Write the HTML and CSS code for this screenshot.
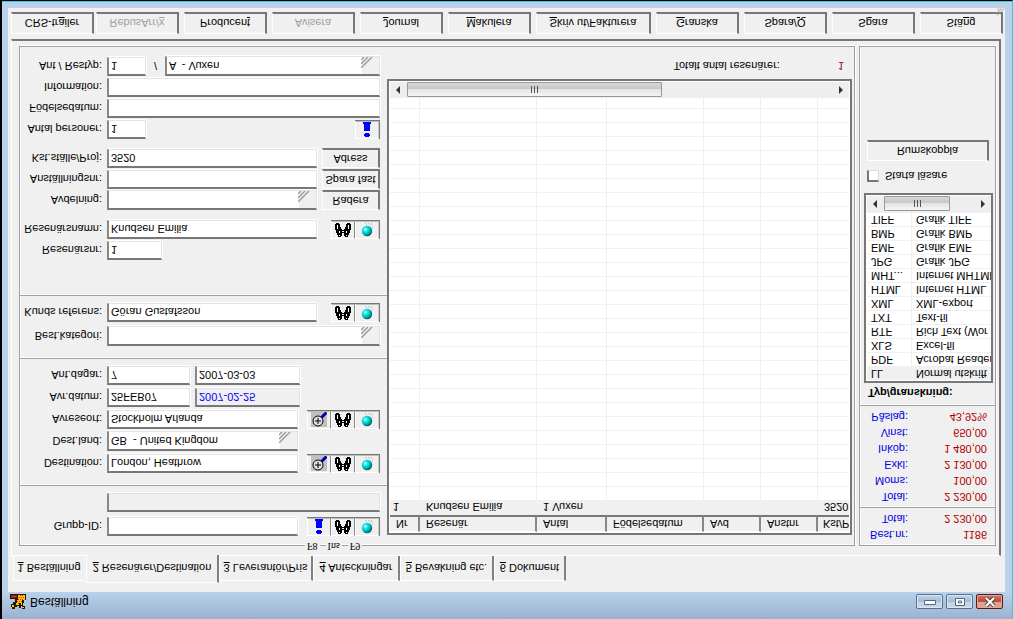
FILE: index.html
```html
<!DOCTYPE html>
<html lang="sv">
<head>
<meta charset="utf-8">
<title>Beställning</title>
<link rel="stylesheet" href="styles.css">
</head>
<body>
<svg class="defs" aria-hidden="true">
  <symbol id="binoculars" viewBox="0 0 16 14"><path d="M3 0h3v1h1v3h2V1h1V0h3v2h1v2h1v3h1v6h-1v1h-3v-1h-1v-3h-1V8H9V7H7v1H6v2H5v3H4v1H1v-1H0V7h1V4h1V2h1z"/><path fill="#fff" d="M4 1h1v1H4zM11 1h1v1h-1zM4 4h1v2H4zM11 4h1v2h-1zM2 8h1v4H2zM13 8h1v4h-1zM7 5h2v1H7z"/></symbol>
  <symbol id="ball" viewBox="0 0 14 14"><circle cx="7" cy="6" r="5.200" fill="url(#ballfill)"/><path d="M5 14l2-2M8 14l3-3M11 14l2-3M12 10l1-1" stroke="#aaa" stroke-dasharray="1 1"/></symbol>
  <symbol id="info" viewBox="0 0 10 15"><path fill="#00f" d="M3 0h4v1h1v2H7v1H3V3H2V1h1zM2 6h6v7h1v2H1v-2h1z"/></symbol>
  <symbol id="lens" viewBox="0 0 16 15"><path fill="#c0c0c0" d="M0 0h16v15H0z"/><circle cx="7" cy="6" r="5" fill="#e0e0e0" stroke="#000"/><path d="M4 6h6M7 3v6" stroke="#000"/><path d="M10.500 9.500l5 5" stroke="#00a" stroke-width="3"/></symbol>
  <symbol id="hatch" viewBox="0 0 12 11"><path d="M0 0l11 11M0 4l7 7M0 8l3 3" stroke="#999" stroke-width="1.400" fill="none"/></symbol>
  <symbol id="left" viewBox="0 0 4 8"><path d="M4 0v8L0 4z" fill="#333"/></symbol>
  <symbol id="right" viewBox="0 0 4 8"><path d="M0 0v8l4-4z" fill="#333"/></symbol>
  <defs><radialGradient id="ballfill" cx=".35" cy=".65" r=".7"><stop offset="0" stop-color="#efffff"/><stop offset=".25" stop-color="#2ee"/><stop offset=".6" stop-color="#0bb"/><stop offset="1" stop-color="#055"/></radialGradient></defs>
</svg>
<div class="window">
  <header class="titlebar">
    <svg class="app-icon" viewBox="0 0 16 16"><path fill="#2a1400" d="M2 1h3v2h2v1h2V2h2v2h1V1h3v3h-2v3h1v3h2v6H0v-5h5V8H3V6H1V3h1z"/><path fill="#fc0" d="M2 3h2v2H2zM6 5h3v2H6zM12 2h2v1h-2zM7 7h5v3H7zM8 10h7v5H8zM11 5h1v2h-1z"/><path fill="#e22" d="M8 6h1v1H8zM7 8h1v1H7zM9 8h1v1H9zM11 8h1v1h-1zM8 10h1v1H8zM10 10h1v1h-1zM12 10h1v1h-1zM9 12h1v1H9zM11 12h1v1h-1zM13 12h1v1h-1zM10 14h1v1h-1zM12 14h1v1h-1z"/><path fill="#a11" d="M1 12h6v3H1z"/><path fill="#482" d="M2 13h4v1H2z"/></svg>
    <h1 class="title">Beställning</h1>
    <button class="win-btn" aria-label="Minimera"><svg width="12" height="6"><path d="M.5 .5h11v4H.5z" fill="#fff" stroke="#567"/></svg></button>
    <button class="win-btn" aria-label="Maximera"><svg width="12" height="10"><path d="M1.500 1.500h9v7h-9zM4.500 4h3v2h-3z" fill="#fff" stroke="#567"/></svg></button>
    <button class="win-btn close" aria-label="Stäng fönster"><svg width="12" height="10"><path d="M2 1l8 8M10 1L2 9" stroke="#544" stroke-width="4"/><path d="M2 1l8 8M10 1L2 9" stroke="#fff" stroke-width="2"/></svg></button>
  </header>
  <main class="client">
    <nav class="tabs">
      <button class="tab t1"><u>1</u> Beställning</button>
      <button class="tab t2 active"><u>2</u> Resenärer/Destination</button>
      <button class="tab t3"><u>3</u> Leverantör/Pris</button>
      <button class="tab t4"><u>4</u> Anteckningar</button>
      <button class="tab t5"><u>5</u> Bevakning etc.</button>
      <button class="tab t6"><u>6</u> Dokument</button>
    </nav>
    <div class="panel">
      <div class="group booking">
        <div class="keys"><span>F8</span><span>Ins</span><span>F9</span></div>
        <form class="form">
          <section class="s1">
            <div class="row"><label for="grupp">Grupp-ID:</label><input id="grupp" class="w-l"><span class="icons"><button type="button" aria-label="Info"><svg class="i-info"><use href="#info"/></svg></button><button type="button" aria-label="Sök"><svg class="i-bin"><use href="#binoculars"/></svg></button><button type="button" aria-label="Ny"><svg class="i-ball"><use href="#ball"/></svg></button></span></div>
            <div class="row"><label for="gruppnamn"></label><input id="gruppnamn" class="w-full ro" readonly aria-label="Gruppnamn"></div>
          </section>
          <section class="s2">
            <div class="row"><label for="dest">Destination:</label><input id="dest" class="w-l" value="London, Heathrow"><span class="icons"><button type="button" aria-label="Zooma"><svg class="i-lens"><use href="#lens"/></svg></button><button type="button" aria-label="Sök"><svg class="i-bin"><use href="#binoculars"/></svg></button><button type="button" aria-label="Ny"><svg class="i-ball"><use href="#ball"/></svg></button></span></div>
            <div class="row"><label for="land">Dest.land:</label><span class="combo w-l"><select id="land"><option>GB &nbsp;- United Kingdom</option></select><svg><use href="#hatch"/></svg></span></div>
            <div class="row"><label for="avreseort">Avreseort:</label><input id="avreseort" class="w-l" value="Stockholm Arlanda"><span class="icons"><button type="button" aria-label="Zooma"><svg class="i-lens"><use href="#lens"/></svg></button><button type="button" aria-label="Sök"><svg class="i-bin"><use href="#binoculars"/></svg></button><button type="button" aria-label="Ny"><svg class="i-ball"><use href="#ball"/></svg></button></span></div>
            <div class="row"><label for="avr">Avr.datum:</label><input id="avr" class="w-s" value="25FEB07"><input class="w-m ro date" readonly value="2007-02-25" aria-label="Avresedatum"></div>
            <div class="row"><label for="dagar">Ant.dagar:</label><input id="dagar" class="w-s" value="7"><input class="w-m" value="2007-03-03" aria-label="Hemresedatum"></div>
          </section>
          <section class="s3">
            <div class="row"><label for="kat">Best.kategori:</label><span class="combo w-full"><select id="kat"><option></option></select><svg><use href="#hatch"/></svg></span></div>
            <div class="row"><label for="ref">Kunds referens:</label><input id="ref" class="w-xl" value="Göran Gustafsson"><span class="icons"><button type="button" aria-label="Sök"><svg class="i-bin"><use href="#binoculars"/></svg></button><button type="button" aria-label="Ny"><svg class="i-ball"><use href="#ball"/></svg></button></span></div>
          </section>
          <section class="s4">
            <div class="row"><label for="rnr">Resenärsnr:</label><input id="rnr" class="w-xs" value="1"></div>
            <div class="row"><label for="rnamn">Resenärsnamn:</label><input id="rnamn" class="w-xl" value="Knudsen Emilia"><span class="icons"><button type="button" aria-label="Sök"><svg class="i-bin"><use href="#binoculars"/></svg></button><button type="button" aria-label="Ny"><svg class="i-ball"><use href="#ball"/></svg></button></span></div>
            <div class="row spaced"><label for="avd">Avdelning:</label><span class="combo w-xl"><select id="avd"><option></option></select><svg><use href="#hatch"/></svg></span><button type="button" class="btn side">Radera</button></div>
            <div class="row"><label for="anst">Anställningsnr:</label><input id="anst" class="w-xl"><button type="button" class="btn side">Spara fast</button></div>
            <div class="row"><label for="kst">Kst.ställe/Proj:</label><input id="kst" class="w-xl" value="3520"><button type="button" class="btn side">Adress</button></div>
            <div class="row spaced"><label for="antal">Antal personer:</label><input id="antal" class="w-xxs" value="1"><span class="icons"><button type="button" aria-label="Info"><svg class="i-info"><use href="#info"/></svg></button></span></div>
            <div class="row"><label for="fod">Födelsedatum:</label><input id="fod" class="w-full"></div>
            <div class="row"><label for="inf">Information:</label><input id="inf" class="w-full"></div>
            <div class="row"><label for="typ">Ant / Restyp:</label><input id="typ" class="w-xxs" value="1"><span class="slash">/</span><span class="combo grow"><select aria-label="Restyp"><option>A &nbsp;- Vuxen</option></select><svg><use href="#hatch"/></svg></span></div>
          </section>
        </form>
        <div class="travellers">
          <div class="frame">
            <div class="scroll-area">
              <table class="grid">
                <colgroup><col class="c-nr"><col class="c-name"><col class="c-antal"><col class="c-fod"><col class="c-avd"><col class="c-avd"><col></colgroup>
                <thead><tr><th>Nr</th><th>Resenär</th><th>Antal</th><th>Födelsedatum</th><th>Avd</th><th>Anstnr</th><th>Kst/P</th></tr></thead>
                <tbody>
                  <tr class="sel"><td>1</td><td>Knudsen Emilia</td><td>1 Vuxen</td><td></td><td></td><td></td><td>3520</td></tr>
                  <tr class="blank"><td></td><td></td><td></td><td></td><td></td><td></td><td></td></tr>
                </tbody>
              </table>
            </div>
            <div class="scrollbar"><svg class="arrow"><use href="#left"/></svg><div class="track"><div class="thumb big"><i></i><i></i><i></i></div></div><svg class="arrow"><use href="#right"/></svg></div>
          </div>
          <div class="count"><span>Totalt antal resenärer:</span><output>1</output></div>
        </div>
      </div>
      <aside class="group sidebar">
        <dl class="sums"><dt>Best.nr:</dt><dd>1186</dd><dt>Total:</dt><dd>2 230,00</dd></dl>
        <dl class="sums"><dt>Total:</dt><dd>2 230,00</dd><dt>Moms:</dt><dd>100,00</dd><dt>Exkl:</dt><dd>2 130,00</dd><dt>Inköp:</dt><dd>1 480,00</dd><dt>Vinst:</dt><dd>650,00</dd><dt>Påslag:</dt><dd>43,92%</dd></dl>
        <div class="output">
          <h2>Typ/granskning:</h2>
          <div class="frame">
            <table class="types">
              <colgroup><col class="c-type"><col></colgroup>
              <tbody>
              <tr class="sel"><td>LL</td><td>Normal utskrift</td></tr>
              <tr><td>PDF</td><td>Acrobat Reader</td></tr>
              <tr><td>XLS</td><td>Excel-fil</td></tr>
              <tr><td>RTF</td><td>Rich Text (Wor</td></tr>
              <tr><td>TXT</td><td>Text-fil</td></tr>
              <tr><td>XML</td><td>XML-export</td></tr>
              <tr><td>HTML</td><td>Internet HTML</td></tr>
              <tr><td>MHT...</td><td>Internet MHTML</td></tr>
              <tr><td>JPG</td><td>Grafik JPG</td></tr>
              <tr><td>EMF</td><td>Grafik EMF</td></tr>
              <tr><td>BMP</td><td>Grafik BMP</td></tr>
              <tr><td>TIFF</td><td>Grafik TIFF</td></tr>
              </tbody>
            </table>
            <div class="scrollbar"><svg class="arrow"><use href="#left"/></svg><div class="track"><div class="thumb small"><i></i><i></i><i></i></div></div><svg class="arrow"><use href="#right"/></svg></div>
          </div>
          <label class="check"><input type="checkbox">Starta läsare</label>
          <button class="btn rooms">Rumskoppla</button>
        </div>
      </aside>
    </div>
    <footer class="actions">
      <div class="pair"><button class="btn">CRS-tr<u>a</u>iler</button><button class="btn" disabled>RebusArr/<u>x</u></button></div>
      <button class="btn">Producen<u>t</u></button>
      <button class="btn" disabled>Avisera</button>
      <button class="btn"><u>J</u>ournal</button>
      <button class="btn"><u>M</u>akulera</button>
      <button class="btn wide"><u>S</u>kriv ut/Fakturera</button>
      <button class="btn"><u>G</u>ranska</button>
      <button class="btn">Spara/<u>Q</u></button>
      <button class="btn">S<u>p</u>ara</button>
      <button class="btn">Stä<u>n</u>g</button>
    </footer>
    <svg class="grip"><use href="#hatch"/></svg>
  </main>
</div>
</body>
</html>
```
FILE: styles.css
```css
* { box-sizing: border-box; }
body {
  margin: 0;
  background: #000;
  color: #000;
  font: 11px/14px "Liberation Sans", Arial, sans-serif;
}
button, input, select { font: inherit; color: inherit; margin: 0; border-radius: 0; }
.defs { position: absolute; width: 0; height: 0; }

/* The whole window is mirrored top to bottom. */
.window {
  display: flex;
  flex-direction: column;
  min-height: 100vh;
  padding: 0 7px 7px 6px;
  border: solid;
  border-width: 0 1px 1px 2px;
  border-color: #000 #3cd #000 #000;
  background: linear-gradient(#9ab3d1, #b9d1ea 27px);
  box-shadow: inset 0 -1px #3cd;
  transform: scaleY(-1);
}

.titlebar { display: flex; align-items: center; gap: 3px; height: 27px; padding: 7px 2px 0 2px; }
.app-icon { width: 16px; height: 16px; }
.title { flex: 1; margin: 0 1px; font-size: 12px; font-weight: normal; }
.win-btn {
  display: flex; align-items: center; justify-content: center;
  width: 27px; height: 15px; padding: 0;
  border: 1px solid #5b6f88; border-radius: 2px;
  background: linear-gradient(#c5d6e8 50%, #a5bcd6 50%, #c0d4ea);
  box-shadow: inset 0 0 0 1px #dce8f4;
}
.win-btn.close { border-color: #5a1a14; background: linear-gradient(#e0a194 50%, #bb4a36 50%, #d27860); box-shadow: inset 0 0 0 1px #e0a59a; }

.client { position: relative; flex: 1; display: flex; flex-direction: column; padding: 9px 2px 4px 3px; background: #f0f0f0; }

.tabs { display: flex; align-items: flex-end; padding-left: 2px; }
.tab {
  height: 25px; padding: 0; white-space: nowrap;
  border: solid; border-width: 1px 2px 0 1px; border-color: #fff #808080 #fff #fff;
  background: #f0f0f0;
}
.tab.active { height: 28px; margin-bottom: -1px; z-index: 1; border-bottom: 0; }
.t1 { width: 73px; border-right-color: #f0f0f0; }
.t2 { width: 133px; }
.t3 { width: 94px; }
.t4 { width: 87px; }
.t5 { width: 94px; }
.t6 { width: 72px; }

.panel {
  flex: 1; display: flex; gap: 4px; margin-right: 2px; padding: 9px 3px 5px 7px;
  border: solid; border-width: 1px 2px 2px 1px; border-color: #fff #777 #777 #fff;
}
.group { position: relative; border: 1px solid #a0a0a0; box-shadow: inset 1px 1px #fff, 1px 1px #fff; }
.booking { flex: 1; min-width: 0; display: flex; }
.keys { position: absolute; top: -7px; left: 285px; display: flex; gap: 6px; font: 10px/12px "Liberation Serif", serif; }
.keys span { padding: 0 2px; background: #f0f0f0; }

.form { width: 367px; flex: none; }
section { display: flex; flex-direction: column; gap: 3px; padding: 0 7px 7px 0; }
section + section { border-top: 1px solid #a0a0a0; box-shadow: inset 0 1px #fff; }
.s1 { padding-top: 9px; gap: 5px; }
.s2 { padding-top: 12px; }
.s3 { padding-top: 12px; gap: 4px; }
.s4 { padding-top: 35px; gap: 2px; padding-bottom: 0; }
.row { display: flex; align-items: center; height: 19px; }
.s3 .row:first-child { height: 20px; }
.row.spaced { margin-top: 8px; }
.row > label { width: 82px; margin-right: 5px; text-align: right; white-space: nowrap; flex: none; }
input:not([type]), .combo {
  height: 19px; padding: 0 2px;
  border: solid; border-width: 2px 1px 1px 2px; border-color: #777 #e3e3e3 #e3e3e3 #888;
  background: #fff; outline: 0; box-shadow: 1px 1px #fff;
}
input.ro { background: #f0f0f0; }
input.date { color: #00f; }
.w-xxs { width: 39px; }
.w-xs { width: 55px; }
.w-s { width: 83px; }
.w-m { width: 105px; margin-left: 5px; }
.w-l { width: 191px; }
.w-xl { width: 210px; }
.w-full { width: 273px; }
.slash { width: 19px; text-align: center; }
.grow { flex: 1; }
.combo { position: relative; display: flex; height: 20px; padding: 0; }
.combo select { flex: 1; min-width: 0; padding: 0 19px 0 2px; border: 0; appearance: none; background: linear-gradient(#f0f0f0, #f0f0f0) right / 17px 100% no-repeat #fff; }
.combo svg { position: absolute; right: 6px; bottom: 0; width: 12px; height: 11px; pointer-events: none; }

.icons { display: flex; margin-left: auto; border-bottom: 1px solid #777; border-right: 1px solid #777; }
.icons button { display: flex; align-items: center; justify-content: center; width: 24px; height: 18px; padding: 0; border: solid; border-width: 1px; border-color: #fff #888 #bbb #fff; background: #f0f0f0; }
.icons button:last-child { border-right-color: #ccc; }
.i-info { width: 10px; height: 15px; }
.i-bin { width: 16px; height: 14px; }
.i-ball { width: 14px; height: 14px; }
.i-lens { width: 16px; height: 15px; }

.btn {
  padding: 0; white-space: nowrap; background: #f0f0f0;
  border: solid; border-width: 1px 2px 2px 1px; border-color: #fff #777 #777 #fff;
}
.btn:disabled { color: #a0a0a0; }
.btn.side { width: 58px; height: 20px; margin-left: auto; }

.travellers { flex: 1; min-width: 0; display: flex; flex-direction: column; padding: 10px 2px 0 0; }
.frame { display: flex; flex-direction: column; border: 2px solid #777; background: #fff; padding: 1px; }
.travellers .frame { flex: 1; }
.scroll-area { flex: 1; display: flex; overflow: hidden; }
table { table-layout: fixed; width: 100%; border-collapse: separate; border-spacing: 0; }
th, td { padding: 0 0 0 6px; text-align: left; font-weight: normal; white-space: nowrap; overflow: hidden; }
.c-nr { width: 30px; }
.c-name { width: 117px; }
.c-antal { width: 70px; }
.c-fod { width: 97px; }
.c-avd { width: 57px; }
.grid th { height: 17px; background: #f0f0f0; border: solid; border-width: 1px 2px 2px 0; border-color: #fff #888 #777 #fff; }
.grid th:last-child { border-right: 0; padding-left: 5px; }
.grid td, .types td { border-right: 1px solid #f0f0f0; }
.grid td:first-child { padding-left: 3px; }
.grid td:last-child, .types td:last-child { border-right: 0; }
.sel td { height: 15px; background: #f0f0f0; }
.blank td { height: 100%; background: repeating-linear-gradient(#fff 0 13px, #f0f0f0 13px 14px); }
.scrollbar { display: flex; align-items: center; gap: 7px; height: 16px; padding: 0 6px; background: #eee; }
.arrow { width: 4px; height: 8px; flex: none; }
.track { flex: 1; }
.thumb { display: flex; align-items: center; justify-content: center; gap: 2px; height: 15px; border: 1px solid #999; border-radius: 1px; background: linear-gradient(#f5f5f5, #e4e4e4 50%, #c6c6c9 52%, #d8d8da); }
.thumb i { width: 1px; height: 7px; background: #555; }
.thumb.big { width: 60%; }
.thumb.small { width: 66px; }
.count { display: flex; justify-content: flex-end; gap: 58px; height: 32px; padding: 6px 8px 0 0; }
.count output { color: #b00000; }

.sidebar { flex: none; width: 137px; }
.sums { display: grid; grid-template-columns: 48px 1fr; margin: 0; padding: 2px 8px 3px 0; line-height: 16px; text-align: right; border-bottom: 1px solid #a0a0a0; box-shadow: 0 1px #fff; }
.sums dt { color: #0000e0; }
.sums dd { margin: 0; color: #b00000; }
.output { padding: 5px 2px 0 4px; }
.output h2 { margin: 0 0 3px 4px; font-size: 11px; line-height: 14px; }
.c-type { width: 45px; }
.types td { height: 14px; line-height: 13px; border-bottom: 1px solid #f0f0f0; padding-left: 4px; }
.output .frame { padding: 1px 0 1px 1px; }
.check { display: flex; align-items: center; gap: 6px; margin: 10px 0 8px 3px; }
.check input { appearance: none; width: 12px; height: 12px; margin: 0; border: solid; border-width: 2px 1px 1px 2px; border-color: #777 #ddd #ddd #777; background: #fff; }
.rooms { display: block; width: 122px; height: 21px; margin-left: 3px; }

.actions { display: flex; gap: 5px; padding-top: 5px; }
.actions .btn { flex: 1 1 83px; min-width: 0; height: 22px; }
.actions .wide { flex-basis: 115px; }
.pair { flex: 2 1 168px; display: flex; gap: 2px; }
.grip { position: absolute; right: 0; bottom: 0; width: 8px; height: 8px; }
```
